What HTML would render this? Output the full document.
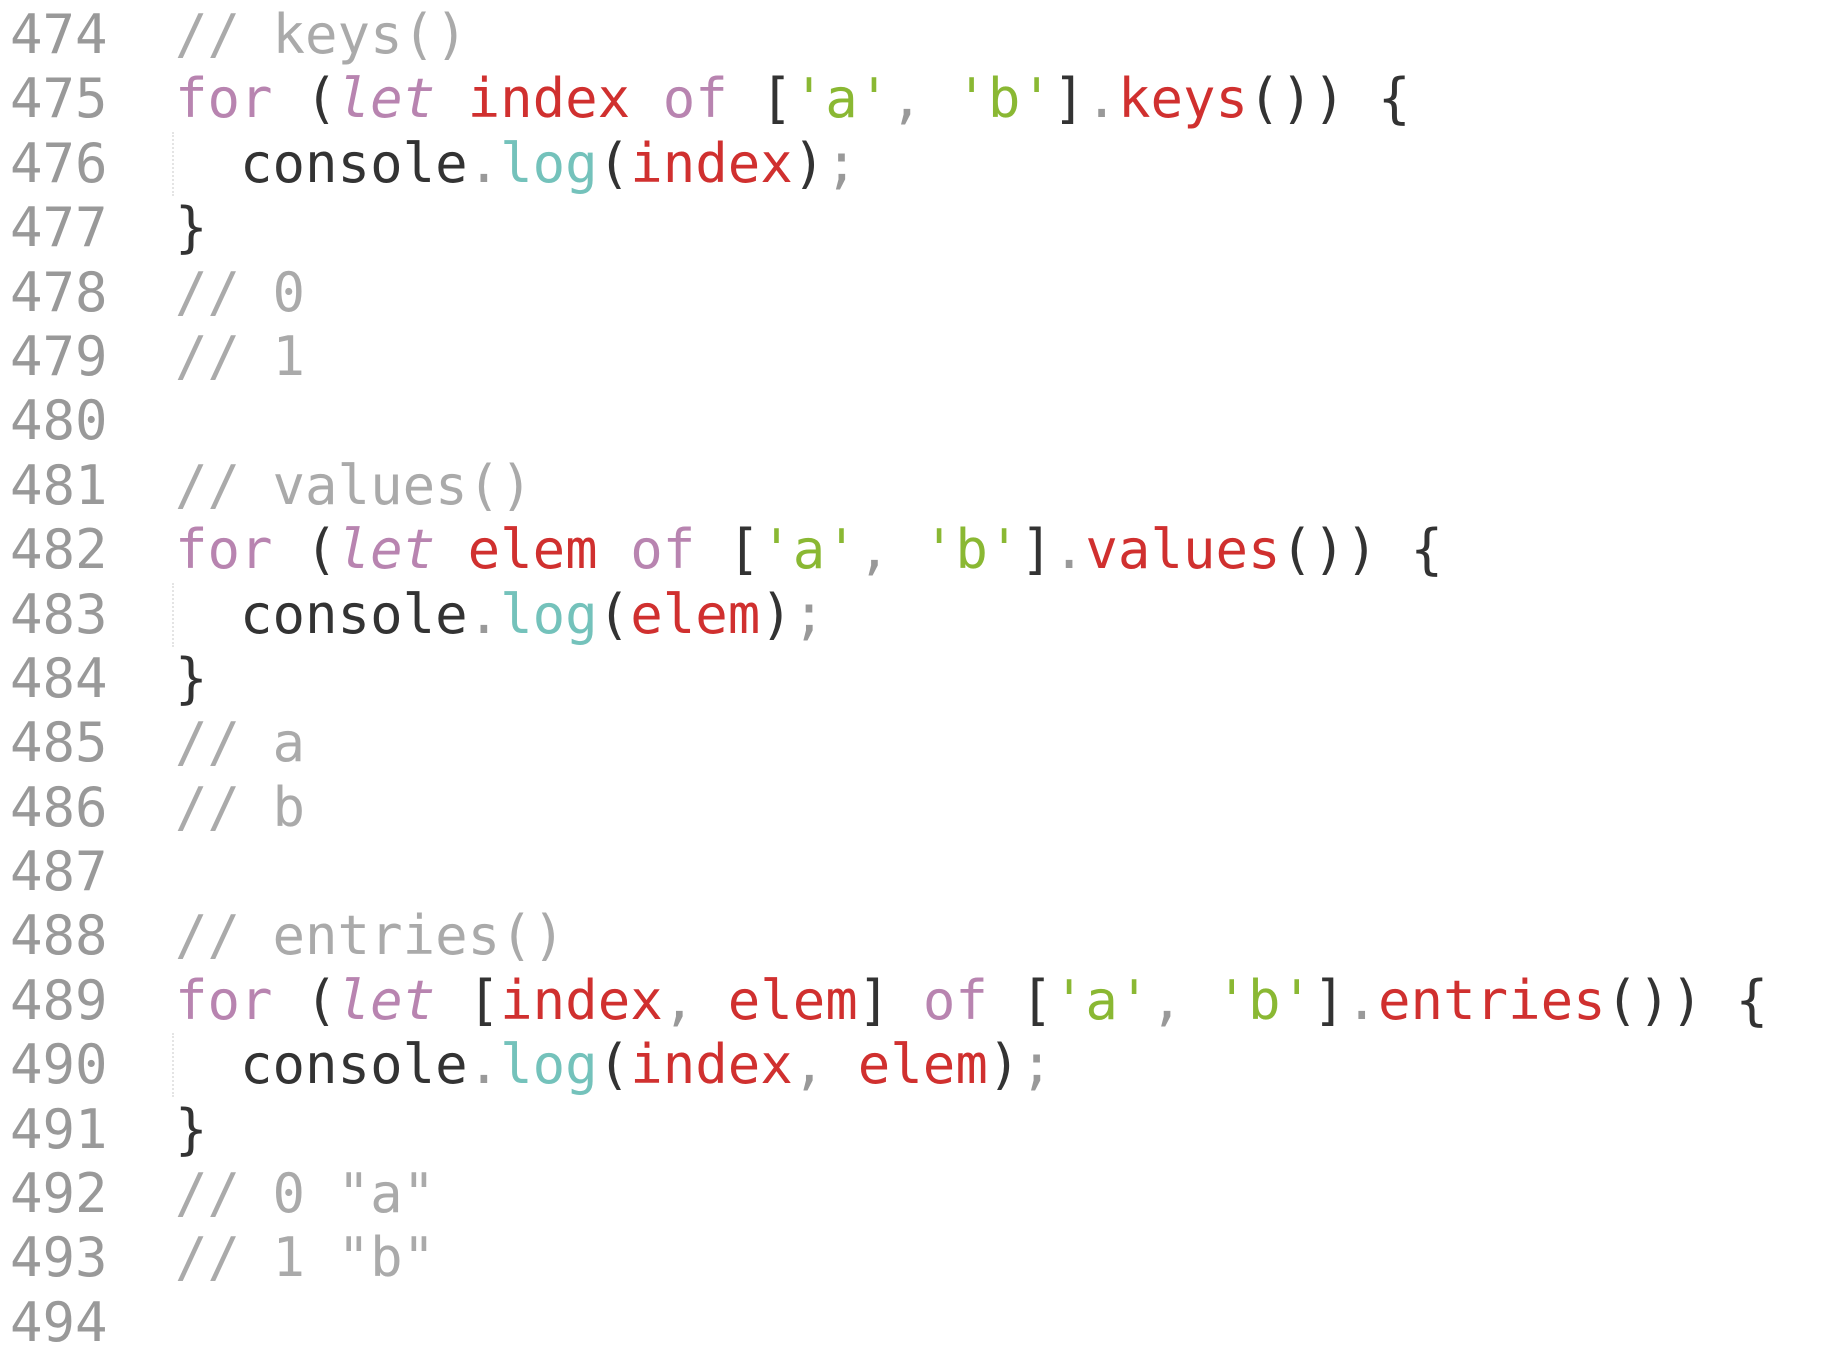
<!DOCTYPE html>
<html><head><meta charset="utf-8"><style>
html,body{margin:0;padding:0;background:#fff;width:1848px;height:1302px;overflow:hidden}
.w{position:absolute;top:3px;left:0;font-family:"DejaVu Sans Mono","Liberation Mono",monospace;font-size:54px;line-height:64.4px;color:#333}
.l{height:64.4px;position:relative;white-space:nowrap}
.n{position:absolute;left:10px;color:#999}
.c{position:absolute;left:175px;white-space:pre}
.cm{color:#aaa}.k{color:#b884b0}.i{color:#b884b0;font-style:italic}.r{color:#d0302f}.g{color:#8ab833}.t{color:#74c2bb}.p{color:#999}
.guide{position:absolute;left:172px;top:0;height:64px;border-left:2px dotted #e4e4e4}
</style></head><body><div class="w"><div class="l"><span class="n">474</span><span class="c cm">// keys()</span></div><div class="l"><span class="n">475</span><span class="c"><span class="k">for</span> (<span class="i">let</span> <span class="r">index</span> <span class="k">of</span> [<span class="g">'a'</span><span class="p">,</span> <span class="g">'b'</span>]<span class="p">.</span><span class="r">keys</span>()) {</span></div><div class="l"><span class="n">476</span><span class="guide"></span><span class="c">  console<span class="p">.</span><span class="t">log</span>(<span class="r">index</span>)<span class="p">;</span></span></div><div class="l"><span class="n">477</span><span class="c">}</span></div><div class="l"><span class="n">478</span><span class="c cm">// 0</span></div><div class="l"><span class="n">479</span><span class="c cm">// 1</span></div><div class="l"><span class="n">480</span></div><div class="l"><span class="n">481</span><span class="c cm">// values()</span></div><div class="l"><span class="n">482</span><span class="c"><span class="k">for</span> (<span class="i">let</span> <span class="r">elem</span> <span class="k">of</span> [<span class="g">'a'</span><span class="p">,</span> <span class="g">'b'</span>]<span class="p">.</span><span class="r">values</span>()) {</span></div><div class="l"><span class="n">483</span><span class="guide"></span><span class="c">  console<span class="p">.</span><span class="t">log</span>(<span class="r">elem</span>)<span class="p">;</span></span></div><div class="l"><span class="n">484</span><span class="c">}</span></div><div class="l"><span class="n">485</span><span class="c cm">// a</span></div><div class="l"><span class="n">486</span><span class="c cm">// b</span></div><div class="l"><span class="n">487</span></div><div class="l"><span class="n">488</span><span class="c cm">// entries()</span></div><div class="l"><span class="n">489</span><span class="c"><span class="k">for</span> (<span class="i">let</span> [<span class="r">index</span><span class="p">,</span> <span class="r">elem</span>] <span class="k">of</span> [<span class="g">'a'</span><span class="p">,</span> <span class="g">'b'</span>]<span class="p">.</span><span class="r">entries</span>()) {</span></div><div class="l"><span class="n">490</span><span class="guide"></span><span class="c">  console<span class="p">.</span><span class="t">log</span>(<span class="r">index</span><span class="p">,</span> <span class="r">elem</span>)<span class="p">;</span></span></div><div class="l"><span class="n">491</span><span class="c">}</span></div><div class="l"><span class="n">492</span><span class="c cm">// 0 "a"</span></div><div class="l"><span class="n">493</span><span class="c cm">// 1 "b"</span></div><div class="l"><span class="n">494</span></div></div></body></html>
